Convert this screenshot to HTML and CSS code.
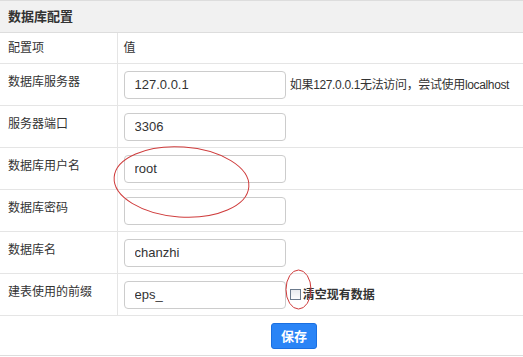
FILE: index.html
```html
<!DOCTYPE html>
<html lang="zh-CN">
<head>
    <meta charset="UTF-8">
    <meta name="viewport" content="width=device-width, initial-scale=1.0">
    <title>数据库配置</title>
    <link rel="stylesheet" href="styles.css">
</head>
<body>
    <div class="panel">
        <div class="panel-heading">数据库配置</div>
        <table class="config-table">
            <colgroup>
                <col class="label-col">
                <col>
            </colgroup>
            <tr class="head-row">
                <td class="label-cell">配置项</td>
                <td>值</td>
            </tr>
            <tr>
                <td class="label-cell">数据库服务器</td>
                <td>
                    <input type="text" class="form-control" value="127.0.0.1">
                    <span class="hint">如果127.0.0.1无法访问，尝试使用localhost</span>
                </td>
            </tr>
            <tr>
                <td class="label-cell">服务器端口</td>
                <td><input type="text" class="form-control" value="3306"></td>
            </tr>
            <tr>
                <td class="label-cell">数据库用户名</td>
                <td><input type="text" class="form-control" value="root"></td>
            </tr>
            <tr>
                <td class="label-cell">数据库密码</td>
                <td><input type="password" class="form-control" value=""></td>
            </tr>
            <tr>
                <td class="label-cell">数据库名</td>
                <td><input type="text" class="form-control" value="chanzhi"></td>
            </tr>
            <tr>
                <td class="label-cell">建表使用的前缀</td>
                <td>
                    <input type="text" class="form-control" value="eps_">
                    <label class="check"><input type="checkbox">清空现有数据</label>
                </td>
            </tr>
            <tr class="action-row">
                <td colspan="2"><button type="submit" class="btn-primary">保存</button></td>
            </tr>
        </table>

        <!-- red annotation marks -->
        <svg class="marks" width="523" height="357" viewBox="0 0 523 357">
            <ellipse cx="181.5" cy="182" rx="67.5" ry="35" transform="rotate(4 181.5 182)"></ellipse>
            <ellipse cx="298.5" cy="289.5" rx="12.5" ry="19.5"></ellipse>
        </svg>
    </div>
</body>
</html>
```

FILE: styles.css
```css
* {
    margin: 0;
    padding: 0;
    box-sizing: border-box;
}

body {
    font-family: 'Liberation Sans', 'Noto Sans CJK SC', sans-serif;
    font-size: 12px;
    color: #333;
    background: #fff;
    overflow: hidden;
}

.panel {
    position: relative;
    border-top: 1px solid #ddd;
    height: 357px;
}

.panel-heading {
    height: 32px;
    line-height: 32px;
    padding: 0 8px;
    background: #f1f1f1;
    border-bottom: 1px solid #ddd;
    font-weight: bold;
    font-size: 13px;
}

/* Table */
.config-table {
    width: 100%;
    table-layout: fixed;
    border-collapse: collapse;
    border-bottom: 1px solid #ddd;
}

.label-col {
    width: 117px;
}

.config-table td {
    height: 42px;
    padding: 7px 6px 0;
    vertical-align: top;
    line-height: 18px;
    white-space: nowrap;
    border-top: 1px solid #e5e5e5;
}

.config-table tr:first-child td {
    border-top: none;
}

.config-table .label-cell {
    padding: 9px 0 0 8px;
    border-right: 1px solid #e5e5e5;
}

.config-table .head-row td {
    height: 30px;
    padding-top: 6px;
}

.form-control {
    display: inline-block;
    width: 162px;
    height: 28px;
    margin-right: 1px;
    padding: 0 10px;
    border: 1px solid #ccc;
    border-radius: 4px;
    font-family: inherit;
    font-size: 13px;
    color: #333;
    vertical-align: middle;
}

.hint {
    vertical-align: middle;
    font-size: 12px;
    letter-spacing: -0.35px;
}

.check {
    font-weight: bold;
    font-size: 12px;
    vertical-align: middle;
}

.check input {
    appearance: none;
    width: 11px;
    height: 11px;
    margin: 0 2px 0 0;
    border: 1px solid #6b7a8c;
    background: linear-gradient(#e8eaee, #fcfcfd);
    vertical-align: -1px;
}

/* Save row */
.config-table .action-row td {
    height: 40px;
    padding: 7px 0 0 271px;
}

.btn-primary {
    width: 46px;
    height: 26px;
    border: 1px solid #1a6fe0;
    border-radius: 3px;
    background: #2a84f6;
    color: #fff;
    font-family: inherit;
    font-weight: bold;
    font-size: 13px;
    cursor: pointer;
}

/* Annotation overlay */
.marks {
    position: absolute;
    top: -1px;
    left: 0;
    pointer-events: none;
}

.marks ellipse {
    fill: none;
    stroke: #cf3b3b;
    stroke-width: 1;
}
```
